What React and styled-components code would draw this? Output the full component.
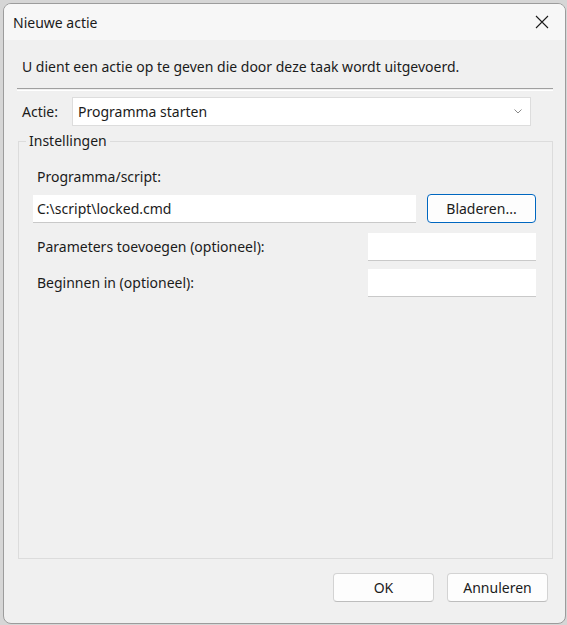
import React from 'react'
import styled, { createGlobalStyle } from 'styled-components'

const GlobalStyle = createGlobalStyle`
  html, body {
    margin: 0;
    padding: 0;
    background: #d6d6d6;
  }
  body {
    font-family: "Segoe UI", "Noto Sans", "Liberation Sans", sans-serif;
    font-size: 14px;
    color: #1b1b1b;
  }
`;

const NewActionDialog = () => {
  return (
    <Screen>
      <Window>
        <TitleBar>
          <Title>Nieuwe actie</Title>
          <CloseButton aria-label="Sluiten">
            <svg width="14" height="14" viewBox="0 0 14 14">
              <path d="M1 1 L13 13 M13 1 L1 13" stroke="#1b1b1b" strokeWidth="1.1" fill="none" />
            </svg>
          </CloseButton>
        </TitleBar>

        <Body>
          <Intro>U dient een actie op te geven die door deze taak wordt uitgevoerd.</Intro>
          <Separator />

          <ActionRow>
            <ActionLabel>Actie:</ActionLabel>
            <Combo>
              <span>Programma starten</span>
              <svg width="8" height="5" viewBox="0 0 8 5">
                <path d="M0.5 0.5 L4 4 L7.5 0.5" stroke="#8a8a8a" strokeWidth="1" fill="none" />
              </svg>
            </Combo>
          </ActionRow>

          <Group>
            <Legend>Instellingen</Legend>
            <FieldLabel $top={16}>Programma/script:</FieldLabel>
            <Row $top={7}>
              <TextField $width={383} defaultValue="C:\script\locked.cmd" />
              <Button $primary $width={109}>Bladeren...</Button>
            </Row>
            <Row $top={10}>
              <FieldLabel>Parameters toevoegen (optioneel):</FieldLabel>
              <TextField $width={168} />
            </Row>
            <Row $top={8}>
              <FieldLabel>Beginnen in (optioneel):</FieldLabel>
              <TextField $width={168} />
            </Row>
          </Group>

          <Footer>
            <Button $width={101}>OK</Button>
            <Button $width={101}>Annuleren</Button>
          </Footer>
        </Body>
      </Window>
    </Screen>
  )
}

export default function App() {
  return (
    <>
      <GlobalStyle />
      <NewActionDialog />
    </>
  )
}

const Screen = styled.div`
  height: 625px;
  padding: 3px 1px 0 3px;
  box-sizing: border-box;
  overflow: hidden;
`;

const Window = styled.div`
  width: 563px;
  height: 621px;
  box-sizing: border-box;
  border: 1px solid #9c9c9c;
  border-radius: 8px;
  overflow: hidden;
  display: flex;
  flex-direction: column;
  background: #f0f0f0;
`;

const TitleBar = styled.div`
  height: 36px;
  flex: none;
  display: flex;
  align-items: center;
  justify-content: space-between;
  padding-left: 9px;
  background: #f7f7f7;
`;

const Title = styled.span`
  font-size: 14px;
  color: #1b1b1b;
`;

const CloseButton = styled.button`
  width: 46px;
  height: 36px;
  border: none;
  background: transparent;
  display: flex;
  align-items: center;
  justify-content: center;
  padding: 0;
`;

const Body = styled.div`
  flex: 1;
  display: flex;
  flex-direction: column;
  padding: 0 12px 0 14px;
  min-height: 0;
`;

const Intro = styled.div`
  margin: 17px 0 0 4px;
  line-height: 20px;
`;

const Separator = styled.div`
  margin: 11px 0 0 -1px;
  height: 1px;
  border-top: 1px solid #a0a0a0;
  border-bottom: 1px solid #ffffff;
`;

const ActionRow = styled.div`
  margin-top: 6px;
  display: flex;
  align-items: center;
  height: 29px;
  padding-left: 4px;
`;

const ActionLabel = styled.span`
  width: 50px;
  flex: none;
`;

const Combo = styled.div`
  width: 459px;
  height: 29px;
  box-sizing: border-box;
  background: #ffffff;
  border: 1px solid #dddddd;
  display: flex;
  align-items: center;
  justify-content: space-between;
  padding: 0 8px 0 5px;
`;

const Group = styled.fieldset`
  flex: 1;
  margin: 5px 0 0 0;
  padding: 0 16px 0 14px;
  border: 1px solid #dcdcdc;
  display: flex;
  flex-direction: column;
  min-width: 0;
`;

const Legend = styled.legend`
  margin-left: -7px;
  padding: 0 3px;
  line-height: 20px;
`;

const FieldLabel = styled.span`
  margin-top: ${p => p.$top || 0}px;
  padding-left: 4px;
  line-height: 20px;
`;

const Row = styled.div`
  margin-top: ${p => p.$top}px;
  display: flex;
  align-items: center;
  justify-content: space-between;
`;

const TextField = styled.input`
  width: ${p => p.$width}px;
  height: 28px;
  box-sizing: border-box;
  border: none;
  border-bottom: 1px solid #c9c9c9;
  background: #ffffff;
  padding: 0 4px;
  font: inherit;
  color: #1b1b1b;
  outline: none;
`;

const Button = styled.button`
  width: ${p => p.$width}px;
  height: 29px;
  box-sizing: border-box;
  background: #fdfdfd;
  border: 1px solid ${p => (p.$primary ? '#0067c0' : '#d3d3d3')};
  border-bottom-color: ${p => (p.$primary ? '#0067c0' : '#bdbdbd')};
  box-shadow: ${p => (p.$primary ? 'inset 0 0 0 1px #ffffff' : 'none')};
  border-radius: 4px;
  font: inherit;
  color: #1b1b1b;
  padding: 0;
`;

const Footer = styled.div`
  flex: none;
  display: flex;
  justify-content: flex-end;
  gap: 13px;
  padding: 14px 5px 21px 0;
`;
